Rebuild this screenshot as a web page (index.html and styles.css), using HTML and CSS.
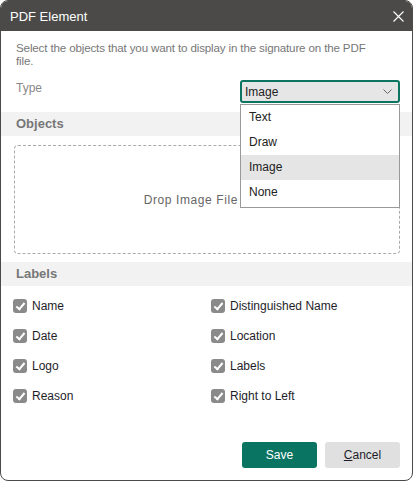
FILE: index.html
```html
<!DOCTYPE html>
<html lang="en">
<head>
  <title>PDF Element</title>
  <link rel="stylesheet" href="styles.css">
</head>
<body>
  <div class="dialog">
    <div class="titlebar">
      <span>PDF Element</span>
      <svg class="close" width="11" height="11" viewBox="0 0 11 11">
        <path d="M0.5 0.5 L10.5 10.5 M10.5 0.5 L0.5 10.5" stroke="#fff" stroke-width="1.1"/>
      </svg>
    </div>

    <div class="content">
      <p class="desc">Select the objects that you want to display in the signature on the PDF file.</p>

      <div class="type-row">
        <span class="type-label">Type</span>
        <div class="select-wrap">
          <div class="select">
            <span>Image</span>
            <svg width="9" height="6" viewBox="0 0 9 6">
              <path d="M0.5 0.5 L4.5 4.5 L8.5 0.5" stroke="#666" stroke-width="1" fill="none"/>
            </svg>
          </div>
          <ul class="dropdown">
            <li>Text</li>
            <li>Draw</li>
            <li class="active">Image</li>
            <li>None</li>
          </ul>
        </div>
      </div>

      <div class="section">Objects</div>
      <div class="dropzone">Drop Image File Here</div>

      <div class="section labels">Labels</div>
      <div class="checks">
        <label class="check"><span class="box"></span>Name</label>
        <label class="check"><span class="box"></span>Distinguished Name</label>
        <label class="check"><span class="box"></span>Date</label>
        <label class="check"><span class="box"></span>Location</label>
        <label class="check"><span class="box"></span>Logo</label>
        <label class="check"><span class="box"></span>Labels</label>
        <label class="check"><span class="box"></span>Reason</label>
        <label class="check"><span class="box"></span>Right to Left</label>
      </div>

      <div class="actions">
        <button class="btn save">Save</button>
        <button class="btn cancel"><u>C</u>ancel</button>
      </div>
    </div>
  </div>
</body>
</html>
```

FILE: styles.css
```css
body {
  margin: 0;
  background: #fff;
  font-family: "Liberation Sans", Arial, sans-serif;
  font-size: 12px;
}
.dialog {
  width: 413px;
  height: 481px;
  box-sizing: border-box;
  border: 1px solid #4b4a48;
  border-radius: 8px;
  overflow: hidden;
  display: flex;
  flex-direction: column;
}
.titlebar {
  height: 30px;
  background: #4b4a48;
  color: #fff;
  font-size: 13px;
  display: flex;
  align-items: center;
  justify-content: space-between;
  padding: 0 8px 0 9px;
  flex-shrink: 0;
}
.content {
  flex: 1;
  display: flex;
  flex-direction: column;
}
.desc {
  margin: 10px 0 0 15px;
  width: 365px;
  color: #777;
  font-size: 11.6px;
  letter-spacing: -0.15px;
  line-height: 13px;
}
.type-row {
  display: flex;
  justify-content: space-between;
  align-items: flex-start;
  margin: 13px 12px 0 15px;
}
.type-label {
  color: #888;
  margin-top: 1px;
}
.select-wrap {
  position: relative;
  width: 160px;
}
.select {
  height: 23px;
  box-sizing: border-box;
  border: 2px solid #0d7462;
  border-radius: 3px;
  background: #e6e6e6;
  color: #222;
  display: flex;
  align-items: center;
  justify-content: space-between;
  padding: 0 6px 0 3px;
}
.dropdown {
  position: absolute;
  top: 24px;
  left: 0;
  right: 0;
  margin: 0;
  padding: 0 0 2px;
  list-style: none;
  background: #fff;
  border: 1px solid #999;
  z-index: 2;
}
.dropdown li {
  height: 25px;
  line-height: 25px;
  padding-left: 8px;
  color: #222;
}
.dropdown li.active {
  background: #e5e5e5;
}
.section {
  margin-top: 9px;
  height: 24px;
  line-height: 24px;
  background: #f2f2f2;
  padding-left: 15px;
  color: #777;
  font-weight: bold;
  font-size: 13px;
}
.section.labels {
  margin-top: 8px;
}
.dropzone {
  margin: 9px 12px 0 13px;
  height: 107px;
  border: 1px dashed #aaa;
  border-radius: 4px;
  display: flex;
  align-items: center;
  justify-content: center;
  color: #666;
  letter-spacing: 0.6px;
}
.checks {
  display: grid;
  grid-template-columns: 198px 1fr;
  margin: 5px 0 0 12px;
}
.check {
  height: 30px;
  display: flex;
  align-items: center;
  color: #1e1e2a;
}
.box {
  width: 14px;
  height: 14px;
  border-radius: 3px;
  background: #8a8a8a;
  margin-right: 5px;
  position: relative;
}
.box::after {
  content: "";
  position: absolute;
  left: 5px;
  top: 2px;
  width: 3px;
  height: 7px;
  border: solid #fff;
  border-width: 0 2px 2px 0;
  transform: rotate(40deg);
}
.actions {
  margin: auto 12px 12px 0;
  display: flex;
  justify-content: flex-end;
  gap: 8px;
}
.btn {
  width: 75px;
  height: 26px;
  border: none;
  border-radius: 3px;
  font-family: inherit;
  font-size: 12px;
}
.save {
  background: #0a7462;
  color: #fff;
}
.cancel {
  background: #e0e0e0;
  color: #1e1e2a;
}
```
